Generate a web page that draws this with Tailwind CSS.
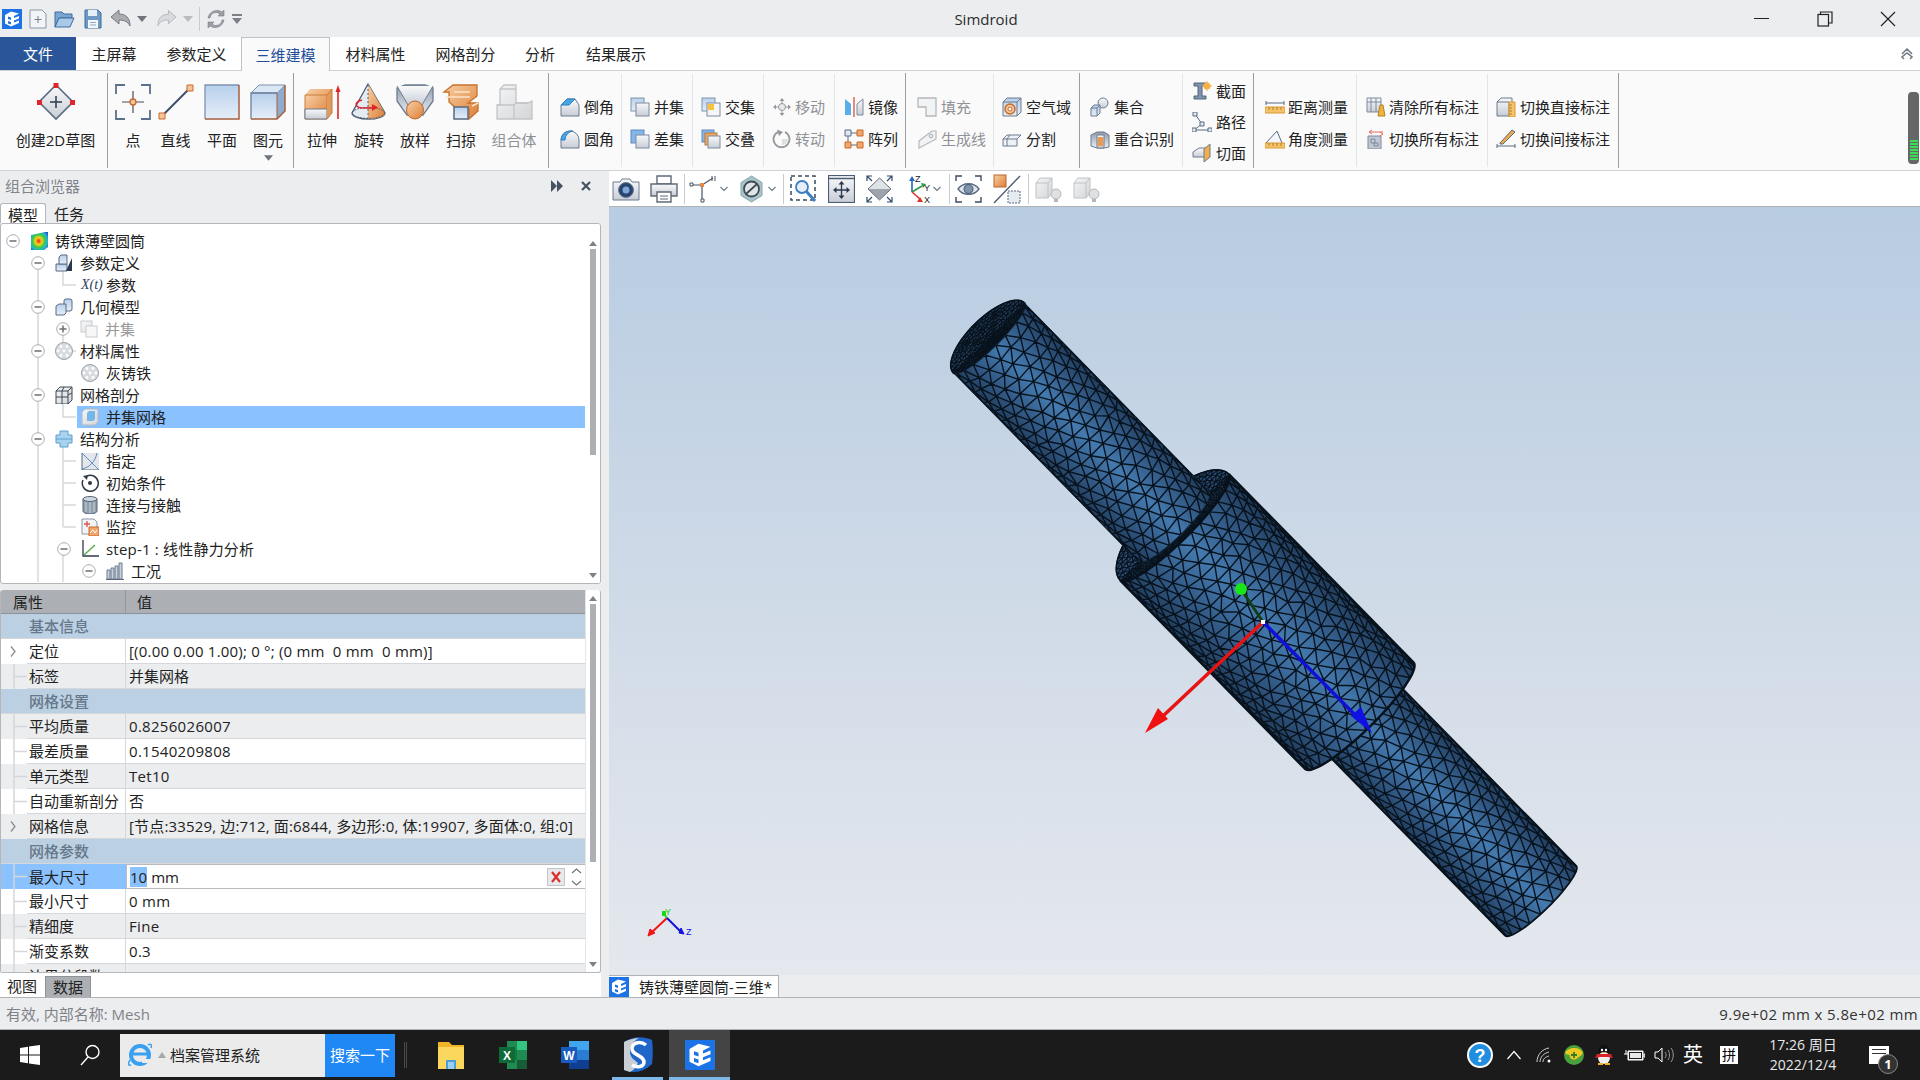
<!doctype html>
<html lang="zh-CN">
<head>
<meta charset="utf-8">
<title>Simdroid</title>
<script src="https://cdn.jsdelivr.net/npm/@tailwindcss/browser@4"></script>
</head>
<body class="flex h-[1080px] w-[1920px] flex-col overflow-hidden bg-[#ecedef] font-['Open_Sans','Noto_Sans_CJK_SC',sans-serif] text-[15px] leading-5 text-[#222]">

<!-- shared gradients and symbols -->
<svg width="0" height="0" class="absolute" aria-hidden="true">
  <defs>
    <linearGradient id="gb" x1="0" y1="0" x2="0" y2="1"><stop offset="0" stop-color="#b7d0ec"/><stop offset="1" stop-color="#e6eef8"/></linearGradient>
    <linearGradient id="gw" x1="0" y1="0" x2="0" y2="1"><stop offset="0" stop-color="#f8f9fb"/><stop offset="1" stop-color="#c8cdd6"/></linearGradient>
    <linearGradient id="go" x1="0" y1="0" x2="1" y2="1"><stop offset="0" stop-color="#f8cfa6"/><stop offset="1" stop-color="#dd7f35"/></linearGradient>
    <linearGradient id="gk" x1="0" y1="0" x2="0" y2="1"><stop offset="0" stop-color="#8e9aaa"/><stop offset="1" stop-color="#eceef2"/></linearGradient>
    <linearGradient id="gy" x1="0" y1="0" x2="1" y2="1"><stop offset="0" stop-color="#f4f5f6"/><stop offset="1" stop-color="#d3d5d8"/></linearGradient>
    <radialGradient id="gr" cx=".45" cy=".5" r=".65"><stop offset="0" stop-color="#ee1c1c"/><stop offset=".3" stop-color="#f6d21c"/><stop offset=".55" stop-color="#3cc84a"/><stop offset=".8" stop-color="#1db7d0"/><stop offset="1" stop-color="#2a58c8"/></radialGradient>
    <symbol id="logo" viewBox="0 0 20 20"><rect width="20" height="20" fill="#1b73e6"/><path d="M3 6l6-3.500 8 2-5 2.500v2l5-2v2.500l-5 2v2l5-2v2.500l-8 3.500-6-3zM6 7.500v2.500l3 1V8.500zM6 12v2.500l3 1V13z" fill="#fff"/></symbol>
    <symbol id="minus" viewBox="0 0 14 14"><circle cx="7" cy="7" r="6.300" fill="#fff" stroke="#a9acb0"/><path d="M3.500 7h7" stroke="#6b6e72" stroke-width="1.500"/></symbol>
    <symbol id="plus" viewBox="0 0 14 14"><circle cx="7" cy="7" r="6.300" fill="#fff" stroke="#a9acb0"/><path d="M3.500 7h7M7 3.500v7" stroke="#6b6e72" stroke-width="1.500"/></symbol>
    <symbol id="gut" viewBox="0 0 26 25"><path d="M13 0v25M13 12.500h13" stroke="#d4d6d9" stroke-width="1.500" fill="none"/></symbol>
    <symbol id="expand" viewBox="0 0 26 25"><path d="M10 7.500l4 5-4 5" stroke="#8a8d91" stroke-width="1.300" fill="none"/></symbol>
    <symbol id="chev" viewBox="0 0 8 6"><path d="M.5 1l3.500 3.500L7.500 1" stroke="#6b7785" stroke-width="1.100" fill="none"/></symbol>
    <symbol id="tri" viewBox="0 0 10 6"><path d="M0 0h10L5 6z" fill="#70757c"/></symbol>
    <symbol id="bulb" viewBox="0 0 28 28"><path d="M2 8l4-5h12v15l-4 5H2z" fill="url(#gy)" stroke="#c0c2c5"/><path d="M2 8h12v15M14 8l4-5" stroke="#c0c2c5" fill="none"/><circle cx="22" cy="19" r="5" fill="#dfe0e2" stroke="#b5b7ba"/><path d="M20 24h4v3h-4z" fill="#b5b7ba"/></symbol>
    <symbol id="chk" viewBox="0 0 18 18"><circle cx="9" cy="9" r="8.500" fill="#d8dbdf" stroke="#9aa0a8"/><circle cx="6" cy="4.500" r="1.400" fill="#fff"/><circle cx="12" cy="4.500" r="1.400" fill="#fff"/><circle cx="3" cy="9" r="1.400" fill="#fff"/><circle cx="9" cy="9" r="1.400" fill="#fff"/><circle cx="15" cy="9" r="1.400" fill="#fff"/><circle cx="6" cy="13.500" r="1.400" fill="#fff"/><circle cx="12" cy="13.500" r="1.400" fill="#fff"/></symbol>
  </defs>
</svg>

<!-- title bar -->
<header class="flex h-[37px] shrink-0 items-center">
  <div class="flex w-[300px] items-center pl-[2px]">
    <svg class="h-[20px] w-[20px]"><use href="#logo"/></svg>
    <svg class="ml-[7px] h-[20px] w-[18px]" viewBox="0 0 18 20"><path d="M1 1h12l4 4v14H1z" fill="#f2f4f7" stroke="#8c97a6"/><path d="M9 7v7M5.500 10.500h7" stroke="#77818e"/></svg>
    <svg class="ml-[7px] h-[20px] w-[21px]" viewBox="0 0 21 20"><path d="M1 3h7l2 2h8v4H5l-4 9z" fill="#7aa6d2" stroke="#3f6c9c"/><path d="M1 18l4-9h15l-4 9z" fill="#a9c9e8" stroke="#3f6c9c"/></svg>
    <svg class="ml-[9px] h-[20px] w-[18px]" viewBox="0 0 18 20"><path d="M1 1h13l3 3v15H1z" fill="#6c99c6" stroke="#3f6c9c"/><path d="M4 1h9v6H4z" fill="#e8eef5"/><path d="M4 11h10v8H4z" fill="#f4f6f9"/><path d="M6 13.500h6M6 16h6" stroke="#8ba8c6"/></svg>
    <svg class="ml-[8px] h-[20px] w-[21px]" viewBox="0 0 21 20"><path d="M1 8l8-7v4c7 0 11 4 11 12-2-4-5-6-11-6v4z" fill="#a9acb1" stroke="#74787e"/></svg>
    <svg class="ml-[6px] h-[6px] w-[10px]"><use href="#tri"/></svg>
    <svg class="ml-[10px] h-[20px] w-[20px]" viewBox="0 0 21 20"><path d="M20 8l-8-7v4C5 5 1 9 1 17c2-4 5-6 11-6v4z" fill="#d8dade" stroke="#b4b7bc"/></svg>
    <svg class="ml-[6px] h-[6px] w-[10px] opacity-40"><use href="#tri"/></svg>
    <div class="ml-[6px] h-[24px] w-px bg-[#c9cbce]"></div>
    <svg class="ml-[7px] h-[20px] w-[18px]" viewBox="0 0 18 20"><path d="M3 9a6 6 0 0 1 10-4l-2 2h6V1l-2 2A9 9 0 0 0 1 9zM15 11a6 6 0 0 1-10 4l2-2H1v6l2-2a9 9 0 0 0 14-6z" fill="#9a9ea4" stroke="#7c8086" stroke-width=".6"/></svg>
    <svg class="ml-[7px] h-[10px] w-[10px]" viewBox="0 0 10 10"><path d="M0 0h10v2H0zM0 4h10L5 10z" fill="#7c8086"/></svg>
  </div>
  <div class="flex-1 text-center text-[#2c2c2c]">Simdroid</div>
  <div class="flex w-[248px] items-center justify-end pr-[1px]">
    <div class="flex h-[37px] w-[63px] items-center justify-center"><div class="h-px w-[15px] bg-[#222]"></div></div>
    <div class="flex h-[37px] w-[63px] items-center justify-center">
      <svg class="h-[16px] w-[16px]" viewBox="0 0 16 16"><path d="M3.500 3.500V1h11.500v11h-3" fill="none" stroke="#222" stroke-width="1.200"/><rect x="1" y="3.500" width="10.500" height="11.500" fill="none" stroke="#222" stroke-width="1.200"/></svg>
    </div>
    <div class="flex h-[37px] w-[63px] items-center justify-center">
      <svg class="h-[16px] w-[16px]" viewBox="0 0 16 16"><path d="M1 1l14 14M15 1L1 15" stroke="#222" stroke-width="1.200"/></svg>
    </div>
  </div>
</header>

<!-- ribbon tabs -->
<nav class="relative flex h-[33px] shrink-0 items-center bg-white text-center">
  <div class="flex h-full w-[76px] items-center justify-center bg-[#2a5699] text-white">文件</div>
  <div class="w-[76px]">主屏幕</div>
  <div class="w-[89px]">参数定义</div>
  <div class="z-10 flex h-[34px] w-[89px] items-center justify-center self-start border border-b-0 border-[#bfc2c5] bg-[#fafafa] text-[#1f4e9c]">三维建模</div>
  <div class="w-[91px]">材料属性</div>
  <div class="w-[89px]">网格剖分</div>
  <div class="w-[60px]">分析</div>
  <div class="w-[92px]">结果展示</div>
  <svg class="ml-auto mr-[7px] h-[12px] w-[12px]" viewBox="0 0 12 12"><path d="M1 6l5-5 5 5M3 11l-2-2 5-4 5 4-2 2" fill="none" stroke="#6f7a86" stroke-width="1.500"/></svg>
</nav>

<!-- ribbon -->
<section class="flex h-[101px] shrink-0 border-y border-[#d0d1d3] bg-[#fafafa]">
  <div class="my-[2px] flex w-[108px] flex-col items-center border-r border-[#9a9da1] pl-[4px] pt-[10px]">
    <svg class="h-[38px] w-[38px]" viewBox="0 0 38 38"><path d="M19 2l17 17-17 17L2 19z" fill="url(#gw)" stroke="#5a6a80" stroke-width="1.600"/><path d="M19 13v12M13 19h12" stroke="#2d3a4c" stroke-width="1.500"/><path d="M16.500 0h5v5h-5zM0 17h5v5H0zM33 17h5v5h-5z" fill="#e0262c"/></svg>
    <span class="mt-[9px] whitespace-nowrap">创建2D草图</span>
  </div>

  <div class="my-[2px] flex w-[186px] border-r border-[#9a9da1] pl-[4px] pt-[10px] text-center">
    <div class="flex w-[42px] flex-col items-center">
      <svg class="h-[38px] w-[38px]" viewBox="0 0 38 38"><path d="M2 11V2h9M27 2h9v9M36 27v9h-9M11 36H2v-9" fill="none" stroke="#5b708e" stroke-width="1.800"/><path d="M8 19h22M19 8v22" stroke="#4a4f58" stroke-width="1.200"/><circle cx="19" cy="19" r="3" fill="#f3c69a" stroke="#c9682a" stroke-width="1.300"/></svg>
      <span class="mt-[9px]">点</span>
    </div>
    <div class="ml-[0.5px] flex w-[42px] flex-col items-center">
      <svg class="h-[38px] w-[38px]" viewBox="0 0 38 38"><path d="M5 33L33 5" stroke="#3d4f70" stroke-width="2"/><path d="M2 30h6v6H2zM30 2h6v6h-6z" fill="#f3c69a" stroke="#c9682a"/></svg>
      <span class="mt-[9px]">直线</span>
    </div>
    <div class="ml-[4.5px] flex w-[42px] flex-col items-center">
      <svg class="h-[38px] w-[38px]" viewBox="0 0 38 38"><rect x="2" y="2" width="34" height="34" fill="url(#gb)"/><path d="M2 36V2h34" fill="none" stroke="#7f93ad" stroke-width="1.300"/><path d="M2 36h34V2" fill="none" stroke="#a55f3e" stroke-width="1.500"/></svg>
      <span class="mt-[9px]">平面</span>
    </div>
    <div class="ml-[4px] flex w-[42px] flex-col items-center">
      <svg class="h-[38px] w-[38px]" viewBox="0 0 38 38"><path d="M2 10h26v26H2z" fill="url(#gb)"/><path d="M2 10l8-8h26l-8 8z" fill="#dbe7f4" stroke="#7f93ad"/><path d="M28 10l8-8v26l-8 8z" fill="#8faccc"/><path d="M2 36V10h26" fill="none" stroke="#6d819c" stroke-width="1.300"/><path d="M2 36h26l8-8V2" fill="none" stroke="#a55f3e" stroke-width="1.500"/><path d="M28 10v26" stroke="#a55f3e"/></svg>
      <span class="mt-[9px]">图元</span>
      <svg class="mt-[5px] h-[6px] w-[9px]"><use href="#tri"/></svg>
    </div>
  </div>

  <div class="my-[2px] flex w-[255px] border-r border-[#9a9da1] pl-[5px] pt-[10px] text-center">
    <div class="flex w-[46px] flex-col items-center">
      <svg class="h-[38px] w-[38px]" viewBox="0 0 38 38"><path d="M2 12l5-6h22v24l-5 6H2z" fill="url(#go)"/><path d="M2 12h22v24H2z" fill="url(#go)" stroke="#c97a3a"/><path d="M2 26h22v10H2z" fill="url(#gw)" stroke="#6e7a8a"/><path d="M24 36l5-6V6l-5 6" fill="#e09a5c" stroke="#c97a3a"/><path d="M35 36V6" stroke="#e0262c" stroke-width="1.600"/><path d="M32.500 9L35 2l2.500 7z" fill="#e0262c"/></svg>
      <span class="mt-[9px]">拉伸</span>
    </div>
    <div class="ml-px flex w-[46px] flex-col items-center">
      <svg class="h-[38px] w-[38px]" viewBox="0 0 38 38"><path d="M18 1L2 30a16 6 0 0 0 33 0z" fill="#e6ebf2" stroke="#4f5f76" stroke-width="1.300"/><path d="M18 1l17 29a16 6 0 0 1-17 6z" fill="url(#go)"/><ellipse cx="18.500" cy="30" rx="16" ry="5.500" fill="none" stroke="#4f5f76" stroke-dasharray="2 1"/><path d="M18 2v33" stroke="#4f5f76" stroke-dasharray="2 2"/><path d="M12 17c-8 2-8 8 2 8h9" fill="none" stroke="#e0262c" stroke-width="1.600"/><path d="M22 21l6 3.500-6 3.500z" fill="#e0262c"/></svg>
      <span class="mt-[9px]">旋转</span>
    </div>
    <div class="flex w-[46px] flex-col items-center">
      <svg class="h-[38px] w-[38px]" viewBox="0 0 38 38"><path d="M1 5l8-3h20l8 3v13l-10 14H11L1 18z" fill="url(#gk)" stroke="#6d7d92" stroke-width="1.300"/><path d="M1 3h36L26 22H12z" fill="url(#gw)"/><path d="M1 3l11 19M37 3L26 22" stroke="#6d7d92"/><ellipse cx="19" cy="27" rx="8.500" ry="9" fill="url(#go)" stroke="#b8672d"/></svg>
      <span class="mt-[9px]">放样</span>
    </div>
    <div class="flex w-[46px] flex-col items-center">
      <svg class="h-[38px] w-[38px]" viewBox="0 0 38 38"><path d="M2 9l9-7h24v11l-9 7h10v8l-9 8V26H15l-8-7V9z" fill="url(#go)" stroke="#c8712c" stroke-width="1.300"/><path d="M4 14h24M12 9l16 0M30 23l6-3" stroke="#fbe3c9" stroke-width="1.600"/><path d="M12 24h14v12H12z" fill="url(#gb)" stroke="#5a6a80" stroke-width="1.500"/></svg>
      <span class="mt-[9px]">扫掠</span>
    </div>
    <div class="ml-[7px] flex w-[46px] flex-col items-center text-[#8f9296]">
      <svg class="h-[38px] w-[38px]" viewBox="0 0 38 38"><path d="M5 22V6l4-4h12v18h12l4-2v18H2V22z" fill="url(#gy)" stroke="#c3c5c8" stroke-width="1.300"/><path d="M2 22h17v14M19 22l2-2M5 6h16M21 20H33" stroke="#c3c5c8" fill="none" stroke-width="1.300"/></svg>
      <span class="mt-[9px] whitespace-nowrap">组合体</span>
    </div>
  </div>

  <div class="my-[3px] flex w-[73px] flex-col border-r border-[#e4e5e6] pl-[11px] pt-[17px]">
    <div class="flex h-[32px] items-center gap-[4px]"><svg class="h-[20px] w-[20px]" viewBox="0 0 20 20"><path d="M1 8l6-6h8l4 6v11H1z" fill="url(#gw)" stroke="#6d7b8e"/><path d="M1 8l6-6h8l-6 6z" fill="#49a4e6" stroke="#2f80bf"/></svg>倒角</div>
    <div class="flex h-[32px] items-center gap-[4px]"><svg class="h-[20px] w-[20px]" viewBox="0 0 20 20"><path d="M1 19V11a9 9 0 0 1 18 0v8z" fill="url(#gw)" stroke="#6d7b8e"/><path d="M1 11a9 9 0 0 1 9-9h3A9 9 0 0 0 5 11z" fill="#49a4e6" stroke="#2f80bf"/></svg>圆角</div>
  </div>
  <div class="my-[3px] flex w-[71px] flex-col border-r border-[#e4e5e6] pl-[8px] pt-[17px]">
    <div class="flex h-[32px] items-center gap-[4px]"><svg class="h-[20px] w-[20px]" viewBox="0 0 20 20"><rect x="1" y="1" width="13" height="13" fill="url(#gb)" stroke="#7f93ad"/><rect x="6" y="6" width="13" height="13" fill="url(#gw)" stroke="#7f8a9c"/></svg>并集</div>
    <div class="flex h-[32px] items-center gap-[4px]"><svg class="h-[20px] w-[20px]" viewBox="0 0 20 20"><rect x="1" y="1" width="13" height="13" fill="#84b7e8" stroke="#5f8cbc"/><rect x="6" y="6" width="13" height="13" fill="url(#gw)" stroke="#7f8a9c"/></svg>差集</div>
  </div>
  <div class="my-[3px] flex w-[71px] flex-col border-r border-[#e4e5e6] pl-[8px] pt-[17px]">
    <div class="flex h-[32px] items-center gap-[4px]"><svg class="h-[20px] w-[20px]" viewBox="0 0 20 20"><rect x="1" y="1" width="13" height="13" fill="url(#gb)" stroke="#7f93ad"/><rect x="6" y="6" width="13" height="13" fill="#f4f6f9" stroke="#7f8a9c"/><rect x="7" y="7" width="6" height="6" fill="#f6c33a"/></svg>交集</div>
    <div class="flex h-[32px] items-center gap-[4px]"><svg class="h-[20px] w-[20px]" viewBox="0 0 20 20"><rect x="1" y="1" width="12" height="12" fill="#84b7e8" stroke="#5f8cbc"/><rect x="4" y="4" width="12" height="12" fill="#efa865" stroke="#b57a42"/><rect x="7" y="7" width="12" height="12" fill="url(#gw)" stroke="#7f8a9c"/></svg>交叠</div>
  </div>
  <div class="my-[3px] flex w-[71px] flex-col border-r border-[#e4e5e6] pl-[8px] pt-[17px] text-[#8f9296]">
    <div class="flex h-[32px] items-center gap-[3px]"><svg class="h-[20px] w-[20px]" viewBox="0 0 20 20"><path d="M10 1l2.500 3h-5zM10 19l2.500-3h-5zM1 10l3-2.500v5zM19 10l-3-2.500v5z" fill="#94989e"/><circle cx="10" cy="10" r="3.500" fill="#e8e9eb" stroke="#94989e"/><path d="M10 4v2.500M10 13.500V16M4 10h2.500M13.500 10H16" stroke="#94989e"/></svg>移动</div>
    <div class="flex h-[32px] items-center gap-[3px]"><svg class="h-[20px] w-[20px]" viewBox="0 0 20 20"><path d="M13 3a8 8 0 1 1-7 0" fill="none" stroke="#94989e" stroke-width="1.800"/><path d="M5 .5L11 3 7 7z" fill="#94989e"/><path d="M10 10h6a6 6 0 0 1-6 6z" fill="#dfe0e2"/></svg>转动</div>
  </div>
  <div class="my-[2px] flex w-[71px] flex-col border-r border-[#9a9da1] pl-[9px] pt-[18px]">
    <div class="flex h-[32px] items-center gap-[4px]"><svg class="h-[20px] w-[20px]" viewBox="0 0 20 20"><path d="M1 2l6 5v11H1z" fill="#59aee8"/><path d="M19 2l-6 5v11h6z" fill="url(#gw)" stroke="#7f8a9c"/><path d="M10 0v20" stroke="#e48a7e" stroke-width="2"/></svg>镜像</div>
    <div class="flex h-[32px] items-center gap-[4px]"><svg class="h-[20px] w-[20px]" viewBox="0 0 20 20"><path d="M4 4h12M4 4v12M4 16h12" stroke="#5a6a80"/><path d="M1 1h6v6H1z" fill="#dfe9f5" stroke="#5a6a80"/><path d="M13 1h6v6h-6zM1 13h6v6H1zM13 13h6v6h-6z" fill="#f1a66b" stroke="#c9682a"/></svg>阵列</div>
  </div>
  <div class="my-[3px] flex w-[88px] flex-col border-r border-[#e4e5e6] pl-[11px] pt-[17px] text-[#8f9296]">
    <div class="flex h-[32px] items-center gap-[4px]"><svg class="h-[20px] w-[20px]" viewBox="0 0 20 20"><path d="M1 1h18v18H9v-9H1z" fill="#f2f3f4" stroke="#b5b7ba" stroke-width="1.300"/></svg>填充</div>
    <div class="flex h-[32px] items-center gap-[4px]"><svg class="h-[20px] w-[20px]" viewBox="0 0 20 20"><path d="M2 12L15 2h4v8L2 19z" fill="#f2f3f4" stroke="#b5b7ba" stroke-width="1.200"/><circle cx="14" cy="7" r="1.800" fill="none" stroke="#a5a7aa"/></svg>生成线</div>
  </div>
  <div class="my-[2px] flex w-[86px] flex-col border-r border-[#9a9da1] pl-[8px] pt-[18px]">
    <div class="flex h-[32px] items-center gap-[4px] whitespace-nowrap"><svg class="h-[20px] w-[20px]" viewBox="0 0 20 20"><path d="M1 5l4-4h14v14l-4 4H1z" fill="url(#gb)" stroke="#6d7b8e"/><path d="M1 5h14v14M15 5l4-4" fill="none" stroke="#6d7b8e"/><circle cx="8" cy="12" r="5" fill="#f3c69a" stroke="#c9682a" stroke-width="1.400"/><circle cx="8" cy="12" r="2" fill="#fff" stroke="#c9682a"/></svg>空气域</div>
    <div class="flex h-[32px] items-center gap-[4px]"><svg class="h-[20px] w-[20px]" viewBox="0 0 20 20"><path d="M1 10l4-4h14l-4 4v7H1z" fill="#eef2f7" stroke="#6d7b8e"/><path d="M1 10h14M8 6l-3 4v7" fill="none" stroke="#6d7b8e"/></svg>分割</div>
  </div>
  <div class="my-[3px] flex w-[103px] flex-col border-r border-[#e4e5e6] pl-[10px] pt-[17px]">
    <div class="flex h-[32px] items-center gap-[4px]"><svg class="h-[20px] w-[20px]" viewBox="0 0 20 20"><circle cx="13" cy="6" r="5" fill="url(#gw)" stroke="#6d7b8e"/><path d="M1 11l3-3h6v8l-3 3H1z" fill="url(#gb)" stroke="#6d7b8e"/><path d="M1 11h6v8M7 11l3-3" fill="none" stroke="#6d7b8e"/></svg>集合</div>
    <div class="flex h-[32px] items-center gap-[4px] whitespace-nowrap"><svg class="h-[20px] w-[20px]" viewBox="0 0 20 20"><path d="M1 6l6-3h7l5 3v12l-5 1H7l-6-2z" fill="url(#gk)" stroke="#6d7b8e"/><path d="M7 6h7v13H7z" fill="url(#gw)" stroke="#6d7b8e"/><path d="M8 8h5v9H8z" fill="#ee9a4e"/></svg>重合识别</div>
  </div>
  <div class="my-[2px] flex w-[71px] flex-col border-r border-[#9a9da1] pl-[9px] pt-[3px]">
    <div class="flex h-[32px] items-center gap-[4px]"><svg class="h-[20px] w-[20px]" viewBox="0 0 20 20"><path d="M2 2h12v3H10v10h4v3H2v-3h4V5H2z" fill="#7f93ad" stroke="#55657c"/><circle cx="15" cy="5" r="3.500" fill="#f6b044"/><path d="M15 0v10M10 5h10" stroke="#f6b044"/></svg>截面</div>
    <div class="flex h-[32px] items-center gap-[4px]"><svg class="h-[20px] w-[20px]" viewBox="0 0 20 20"><path d="M3 2l7 10-8 6h16" fill="none" stroke="#5a6a80"/><path d="M1 0h4v4H1zM8 10h4v4H8zM0 16h4v4H0zM16 16h4v4h-4z" fill="#dfe9f5" stroke="#5a6a80"/></svg>路径</div>
    <div class="flex h-[32px] items-center gap-[4px]"><svg class="h-[20px] w-[20px]" viewBox="0 0 20 20"><path d="M1 9l6-4h9v9H1z" fill="url(#gw)" stroke="#6d7b8e"/><path d="M12 6l6-5v13l-6 5z" fill="#f2b04c" stroke="#6d7b8e"/></svg>切面</div>
  </div>
  <div class="my-[3px] flex w-[103px] flex-col border-r border-[#e4e5e6] pl-[11px] pt-[17px]">
    <div class="flex h-[32px] items-center gap-[3px] whitespace-nowrap"><svg class="h-[20px] w-[20px]" viewBox="0 0 20 20"><path d="M1 6h18" stroke="#5a6a80"/><path d="M1 4v4M19 4v4" stroke="#5a6a80"/><path d="M0 10h20v6H0z" fill="#f5c36a" stroke="#d99a35"/><path d="M4 10v3M8 10v3M12 10v3M16 10v3" stroke="#b97f25"/></svg>距离测量</div>
    <div class="flex h-[32px] items-center gap-[3px] whitespace-nowrap"><svg class="h-[20px] w-[20px]" viewBox="0 0 20 20"><path d="M1 14L12 2l5 12" fill="#f4f6f9" stroke="#5a6a80"/><path d="M0 14h20v5H0z" fill="#f5c36a" stroke="#d99a35"/><path d="M4 14v3M8 14v3M12 14v3M16 14v3" stroke="#b97f25"/></svg>角度测量</div>
  </div>
  <div class="my-[3px] flex w-[131px] flex-col border-r border-[#e4e5e6] pl-[9px] pt-[17px]">
    <div class="flex h-[32px] items-center gap-[3px] whitespace-nowrap"><svg class="h-[20px] w-[20px]" viewBox="0 0 20 20"><path d="M1 1h14v14H1z" fill="url(#gw)" stroke="#7f8a9c"/><path d="M1 5h14M5 1v14M10 1v14" stroke="#7f8a9c"/><path d="M14 8h3l2 11h-7z" fill="#efb33f" stroke="#b3841f"/></svg>清除所有标注</div>
    <div class="flex h-[32px] items-center gap-[3px] whitespace-nowrap"><svg class="h-[20px] w-[20px]" viewBox="0 0 20 20"><path d="M2 7h13v13H2z" fill="#c0c8d4" stroke="#7f8a9c"/><path d="M5 10h4v4H5zM8 14h4v3H8z" fill="none" stroke="#7f8a9c"/><path d="M6 1l-3 2 3 2M3 3h14" stroke="#ea6b5e" fill="none"/><path d="M14 3l3 2-3 2" stroke="#ea6b5e" fill="none"/></svg>切换所有标注</div>
  </div>
  <div class="my-[2px] flex w-[131px] flex-col border-r border-[#9a9da1] pl-[8px] pt-[18px]">
    <div class="flex h-[32px] items-center gap-[4px] whitespace-nowrap"><svg class="h-[20px] w-[20px]" viewBox="0 0 20 20"><path d="M1 5l4-4h11v15l-3 3H1z" fill="url(#gw)" stroke="#6d7b8e"/><path d="M1 5h12v14" fill="none" stroke="#6d7b8e"/><path d="M13 5h6v15h-6z" fill="#f5c36a" stroke="#d99a35"/><path d="M13 8h3M13 11h3M13 14h3M13 17h3" stroke="#b97f25"/></svg>切换直接标注</div>
    <div class="flex h-[32px] items-center gap-[4px] whitespace-nowrap"><svg class="h-[20px] w-[20px]" viewBox="0 0 20 20"><path d="M1 17h18M1 15v4M19 15v4" stroke="#5a6a80"/><path d="M4 14L16 1l3 2L7 15H4z" fill="#f0a94a" stroke="#5a6a80"/></svg>切换间接标注</div>
  </div>
  <div class="relative flex-1">
    <div class="absolute right-[1px] top-[21px] flex h-[72px] w-[11px] flex-col justify-end gap-px rounded-[4px] bg-[#666] px-[1.5px] pb-[4px]">
      <div class="h-[2px] bg-[#3ddc5a]"></div><div class="h-[2px] bg-[#3ddc5a]"></div><div class="h-[2px] bg-[#3ddc5a]"></div><div class="h-[2px] bg-[#3ddc5a]"></div><div class="h-[2px] bg-[#3ddc5a]"></div><div class="h-[2px] bg-[#3ddc5a]"></div><div class="h-[2px] bg-[#3ddc5a]"></div>
    </div>
  </div>
</section>

<!-- workspace -->
<main class="flex h-[826px] shrink-0">
  <!-- left dock -->
  <aside class="flex w-[609px] shrink-0 flex-col pr-[8px]">
    <div class="flex h-[32px] shrink-0 items-center pb-[3px] pl-[5px] text-[#80848a]">
      组合浏览器
      <svg class="ml-[471px] h-[12px] w-[12px]" viewBox="0 0 12 12"><path d="M0 0l6 6-6 6zM6 0l6 6-6 6z" fill="#46525f"/></svg>
      <svg class="ml-[18px] h-[10px] w-[10px]" viewBox="0 0 10 10"><path d="M1 1l8 8M9 1L1 9" stroke="#46525f" stroke-width="2.200"/></svg>
    </div>
    <div class="relative z-10 flex h-[20px] shrink-0">
      <div class="w-[46px] rounded-t-[3px] border border-b-0 border-[#b4b6b9] bg-white pt-px text-center">模型</div>
      <div class="ml-[8px] pt-px">任务</div>
    </div>
    <!-- tree -->
    <div class="relative h-[361px] shrink-0 overflow-hidden rounded-[3px] border border-[#b4b6b9] bg-white pt-[6px]">
      <svg class="absolute left-0 top-[6px] h-[352px] w-[200px]" viewBox="0 0 200 352" aria-hidden="true">
        <path d="M37 33v320M62 33v22h13M62 99v22h13M62 165v22h13M62 209v88M62 231h13M62 253h13M62 275h13M62 297h13M62 319v34" stroke="#d6d8db" stroke-width="1.500" fill="none"/>
      </svg>
      <div class="relative">
        <div class="flex h-[22px] items-center pl-[5px]"><svg class="h-[14px] w-[14px]"><use href="#minus"/></svg>
          <svg class="ml-[10px] h-[18px] w-[18px]" viewBox="0 0 18 18"><path d="M1 3l14-3h3v15l-4 3H1z" fill="url(#gr)"/></svg><span class="ml-[7px]">铸铁薄壁圆筒</span></div>
        <div class="flex h-[22px] items-center pl-[30px]"><svg class="h-[14px] w-[14px]"><use href="#minus"/></svg>
          <svg class="ml-[10px] h-[18px] w-[18px]" viewBox="0 0 18 18"><path d="M1 10h11v7H1z" fill="url(#gb)" stroke="#5a6a80"/><path d="M4 3l2-2h6v9H4z" fill="url(#gb)" stroke="#5a6a80"/><path d="M17 4v13h-6z" fill="#27384f"/></svg><span class="ml-[7px]">参数定义</span></div>
        <div class="flex h-[22px] items-center pl-[80px]"><span class="w-[18px] whitespace-nowrap font-['Liberation_Serif',serif] text-[14px] italic text-[#2d3f5c]">X(t)</span><span class="ml-[7px]">参数</span></div>
        <div class="flex h-[22px] items-center pl-[30px]"><svg class="h-[14px] w-[14px]"><use href="#minus"/></svg>
          <svg class="ml-[10px] h-[18px] w-[18px]" viewBox="0 0 18 18"><rect x="9" y="1" width="8" height="12" rx="2" fill="url(#gb)" stroke="#5a6a80"/><path d="M1 8l3-2h7v9l-2 2H1z" fill="url(#gb)" stroke="#5a6a80"/></svg><span class="ml-[7px]">几何模型</span></div>
        <div class="flex h-[22px] items-center pl-[55px] text-[#999]"><svg class="h-[14px] w-[14px]"><use href="#plus"/></svg>
          <svg class="ml-[10px] h-[18px] w-[18px] opacity-70" viewBox="0 0 18 18"><rect x="1" y="1" width="11" height="11" fill="url(#gy)" stroke="#b5b7ba"/><rect x="6" y="6" width="11" height="11" fill="#f4f4f5" stroke="#b5b7ba"/></svg><span class="ml-[7px]">并集</span></div>
        <div class="flex h-[22px] items-center pl-[30px]"><svg class="h-[14px] w-[14px]"><use href="#minus"/></svg>
          <svg class="ml-[10px] h-[18px] w-[18px]"><use href="#chk"/></svg><span class="ml-[7px]">材料属性</span></div>
        <div class="flex h-[22px] items-center pl-[80px]"><svg class="h-[18px] w-[18px]"><use href="#chk"/></svg><span class="ml-[7px]">灰铸铁</span></div>
        <div class="flex h-[22px] items-center pl-[30px]"><svg class="h-[14px] w-[14px]"><use href="#minus"/></svg>
          <svg class="ml-[10px] h-[18px] w-[18px]" viewBox="0 0 18 18"><path d="M1 5l4-4h12v13l-4 4H1z" fill="url(#gy)" stroke="#3c4653"/><path d="M1 5h12v13M13 5l4-4M7 5v13M1 11h12M9 1L7 5M13 9l4-2" fill="none" stroke="#3c4653"/></svg><span class="ml-[7px]">网格剖分</span></div>
        <div class="flex h-[22px] items-center pl-[76px]"><div class="flex h-full w-[510px] items-center bg-[#8ac2ff] pl-[4px]"><svg class="h-[18px] w-[18px]" viewBox="0 0 18 18"><path d="M1 4l3-3h13v13l-3 3H1z" fill="url(#gy)" stroke="#b1b9c4"/><path d="M6 5l2-2h6v8l-2 2H6z" fill="#74b6e6"/></svg><span class="ml-[7px]">并集网格</span></div></div>
        <div class="flex h-[22px] items-center pl-[30px]"><svg class="h-[14px] w-[14px]"><use href="#minus"/></svg>
          <svg class="ml-[10px] h-[18px] w-[18px]" viewBox="0 0 18 18"><path d="M5 1h8v4h4v8h-4v4H5v-4H1V5h4z" fill="#a9d2ee" stroke="#5aa0d2"/><path d="M1 9h16" stroke="#5aa0d2"/></svg><span class="ml-[7px]">结构分析</span></div>
        <div class="flex h-[22px] items-center pl-[80px]"><svg class="h-[18px] w-[18px]" viewBox="0 0 18 18"><rect x="1" y="1" width="17" height="17" fill="#e3e6ea"/><path d="M1 1l17 17M16 1C14 10 9 15 1 17" stroke="#5e8cbb" fill="none"/><path d="M1 1v17h17" stroke="#5a6a80" fill="none"/></svg><span class="ml-[7px]">指定</span></div>
        <div class="flex h-[22px] items-center pl-[80px]"><svg class="h-[18px] w-[18px]" viewBox="0 0 18 18"><path d="M6 2a8 8 0 1 1-4 4" fill="none" stroke="#2f3a48" stroke-width="1.500"/><path d="M2 2l5-1-1 5z" fill="#2f3a48"/><circle cx="9" cy="9" r="2" fill="#2f3a48"/></svg><span class="ml-[7px]">初始条件</span></div>
        <div class="flex h-[22px] items-center pl-[80px]"><svg class="h-[18px] w-[18px]" viewBox="0 0 18 18"><path d="M2 3h14v12a7 3 0 0 1-14 0z" fill="#8fa0ad" stroke="#56677a"/><ellipse cx="9" cy="3" rx="7" ry="2.500" fill="#cfd6dc" stroke="#56677a"/><path d="M5 6v10M9 6v11M13 6v10" stroke="#c9d1d8"/></svg><span class="ml-[7px]">连接与接触</span></div>
        <div class="flex h-[22px] items-center pl-[80px]"><svg class="h-[18px] w-[18px]" viewBox="0 0 18 18"><path d="M1 1h12l3 3v6H9v6H1z" fill="#f2f4f7" stroke="#8c97a6"/><path d="M6 3v6M3 6h6" stroke="#d9534a" stroke-width="1.300"/><path d="M8 9h10v9H8z" fill="#f1a66b" stroke="#c9682a"/><path d="M9 15l3-3 2 3 2-3" stroke="#fff" fill="none"/></svg><span class="ml-[7px]">监控</span></div>
        <div class="flex h-[22px] items-center pl-[56px]"><svg class="h-[14px] w-[14px]"><use href="#minus"/></svg>
          <svg class="ml-[10px] h-[18px] w-[18px]" viewBox="0 0 18 18"><path d="M2 0v16h16" stroke="#2f3a48" fill="none" stroke-width="1.300"/><path d="M3 15l11-10" stroke="#55a84a" stroke-width="1.300"/></svg><span class="ml-[7px] whitespace-nowrap tracking-[0.2px]">step-1 : 线性静力分析</span></div>
        <div class="flex h-[22px] items-center pl-[81px]"><svg class="h-[14px] w-[14px]"><use href="#minus"/></svg>
          <svg class="ml-[10px] h-[18px] w-[18px]" viewBox="0 0 18 18"><path d="M1 8h3v9H1zM5 6h3v11H5zM9 4h3v13H9zM13 1h3v16h-3z" fill="#c9d2dc" stroke="#6a7a8e"/><path d="M0 17.500h18" stroke="#5a6a80"/></svg><span class="ml-[7px]">工况</span></div>
      </div>
      <div class="absolute right-0 top-0 flex h-full w-[15px] flex-col items-center bg-white">
        <svg class="mt-[17px] h-[5px] w-[8px]" viewBox="0 0 8 5"><path d="M0 5l4-5 4 5z" fill="#7c8288"/></svg>
        <div class="mt-[3px] h-[206px] w-[6px] bg-[#acb0b4]"></div>
        <svg class="mb-[5px] mt-auto h-[5px] w-[8px]" viewBox="0 0 8 5"><path d="M0 0l4 5 4-5z" fill="#7c8288"/></svg>
      </div>
    </div>
    <!-- property table -->
    <div class="relative mt-[6px] h-[383px] shrink-0 overflow-hidden rounded-[3px] border border-t-0 border-[#b4b6b9] bg-white pr-[14px]">
      <div class="flex h-[24px] items-center border-b border-[#8e9296] bg-[#acb0b4]"><div class="flex h-full w-[125px] items-center border-r border-[#94989c] pl-[12px]">属性</div><div class="pl-[11px]">值</div></div>

      <div class="flex h-[25px] items-center border-b border-[#d5d7da] bg-[#bcd0e3] pl-[28px] font-medium text-[#66788a]">基本信息</div>

      <div class="flex h-[25px] bg-white"><svg class="h-[25px] w-[26px] shrink-0"><use href="#expand"/></svg><div class="flex flex-1 items-center border-b border-[#d5d7da]"><div class="flex h-full w-[99px] items-center border-r border-[#d5d7da] pl-[2px]">定位</div><div class="whitespace-pre pl-[3px] tracking-[0.2px]">[(0.00 0.00 1.00); 0 °; (0 mm  0 mm  0 mm)]</div></div></div>
      <div class="flex h-[25px] bg-[#ecedef]"><svg class="h-[25px] w-[26px] shrink-0"><use href="#gut"/></svg><div class="flex flex-1 items-center border-b border-[#d5d7da]"><div class="flex h-full w-[99px] items-center border-r border-[#d5d7da] pl-[2px]">标签</div><div class="pl-[3px]">并集网格</div></div></div>

      <div class="flex h-[25px] items-center border-b border-[#d5d7da] bg-[#bcd0e3] pl-[28px] font-medium text-[#66788a]">网格设置</div>

      <div class="flex h-[25px] bg-[#ecedef]"><svg class="h-[25px] w-[26px] shrink-0"><use href="#gut"/></svg><div class="flex flex-1 items-center border-b border-[#d5d7da]"><div class="flex h-full w-[99px] items-center border-r border-[#d5d7da] pl-[2px]">平均质量</div><div class="pl-[3px] tracking-[0.3px]">0.8256026007</div></div></div>
      <div class="flex h-[25px] bg-white"><svg class="h-[25px] w-[26px] shrink-0"><use href="#gut"/></svg><div class="flex flex-1 items-center border-b border-[#d5d7da]"><div class="flex h-full w-[99px] items-center border-r border-[#d5d7da] pl-[2px]">最差质量</div><div class="pl-[3px] tracking-[0.3px]">0.1540209808</div></div></div>
      <div class="flex h-[25px] bg-[#ecedef]"><svg class="h-[25px] w-[26px] shrink-0"><use href="#gut"/></svg><div class="flex flex-1 items-center border-b border-[#d5d7da]"><div class="flex h-full w-[99px] items-center border-r border-[#d5d7da] pl-[2px]">单元类型</div><div class="pl-[3px] tracking-[0.3px]">Tet10</div></div></div>
      <div class="flex h-[25px] bg-white"><svg class="h-[25px] w-[26px] shrink-0"><use href="#gut"/></svg><div class="flex flex-1 items-center border-b border-[#d5d7da]"><div class="flex h-full w-[99px] items-center whitespace-nowrap border-r border-[#d5d7da] pl-[2px]">自动重新剖分</div><div class="pl-[3px]">否</div></div></div>
      <div class="flex h-[25px] bg-[#ecedef]"><svg class="h-[25px] w-[26px] shrink-0"><use href="#expand"/></svg><div class="flex flex-1 items-center border-b border-[#d5d7da]"><div class="flex h-full w-[99px] items-center border-r border-[#d5d7da] pl-[2px]">网格信息</div><div class="whitespace-nowrap pl-[3px] tracking-[0.16px]">[节点:33529, 边:712, 面:6844, 多边形:0, 体:19907, 多面体:0, 组:0]</div></div></div>

      <div class="flex h-[25px] items-center border-b border-[#d5d7da] bg-[#bcd0e3] pl-[28px] font-medium text-[#66788a]">网格参数</div>

      <div class="flex h-[25px] bg-white">
        <svg class="h-[25px] w-[26px] shrink-0 bg-[#8ac2ff]"><use href="#gut"/></svg>
        <div class="flex h-full w-[99px] items-center bg-[#8ac2ff] pl-[2px]">最大尺寸</div>
        <div class="flex flex-1 items-center border-y border-l border-[#b8babd] pl-[3px]">
          <span class="bg-[#8ac2ff]">10</span><span class="ml-[4px]">mm</span>
          <svg class="ml-auto h-[18px] w-[18px]" viewBox="0 0 18 18"><rect x=".5" y=".5" width="17" height="17" fill="#e7e9ec" stroke="#c2c5c9"/><path d="M5 4l8 10M13 4L5 14" stroke="#d9322c" stroke-width="2.200"/></svg>
          <svg class="ml-[6px] mr-[4px] h-[18px] w-[11px]" viewBox="0 0 11 18"><path d="M1 5l4.500-4L10 5M1 13l4.500 4 4.500-4" fill="none" stroke="#6f7478" stroke-width="1.200"/></svg>
        </div>
      </div>
      <div class="flex h-[25px] bg-white"><svg class="h-[25px] w-[26px] shrink-0"><use href="#gut"/></svg><div class="flex flex-1 items-center border-b border-[#d5d7da]"><div class="flex h-full w-[99px] items-center border-r border-[#d5d7da] pl-[2px]">最小尺寸</div><div class="pl-[3px] tracking-[0.3px]">0 mm</div></div></div>
      <div class="flex h-[25px] bg-[#ecedef]"><svg class="h-[25px] w-[26px] shrink-0"><use href="#gut"/></svg><div class="flex flex-1 items-center border-b border-[#d5d7da]"><div class="flex h-full w-[99px] items-center border-r border-[#d5d7da] pl-[2px]">精细度</div><div class="pl-[3px] tracking-[0.3px]">Fine</div></div></div>
      <div class="flex h-[25px] bg-white"><svg class="h-[25px] w-[26px] shrink-0"><use href="#gut"/></svg><div class="flex flex-1 items-center border-b border-[#d5d7da]"><div class="flex h-full w-[99px] items-center border-r border-[#d5d7da] pl-[2px]">渐变系数</div><div class="pl-[3px] tracking-[0.3px]">0.3</div></div></div>
      <div class="flex h-[25px] bg-[#ecedef]"><svg class="h-[25px] w-[26px] shrink-0"><use href="#gut"/></svg><div class="flex flex-1 items-center border-b border-[#d5d7da]"><div class="flex h-full w-[99px] items-center border-r border-[#d5d7da] pl-[2px]">边界分段数</div><div class="pl-[3px]">1</div></div></div>

      <div class="absolute right-0 top-0 flex h-full w-[15px] flex-col items-center border-l border-[#e4e5e6] bg-white">
        <svg class="mt-[6px] h-[5px] w-[8px]" viewBox="0 0 8 5"><path d="M0 5l4-5 4 5z" fill="#7c8288"/></svg>
        <div class="mt-[3px] h-[258px] w-[6px] bg-[#acb0b4]"></div>
        <svg class="mb-[5px] mt-auto h-[5px] w-[8px]" viewBox="0 0 8 5"><path d="M0 0l4 5 4-5z" fill="#7c8288"/></svg>
      </div>
    </div>
    <div class="flex h-[24px] shrink-0 bg-white pl-[7px]">
      <div class="pt-[3px]">视图</div>
      <div class="ml-[8px] mt-[3px] w-[46px] border border-b-0 border-[#8e9296] bg-[#acb0b4] text-center">数据</div>
    </div>
  </aside>

  <!-- 3D viewport column -->
  <div class="flex min-w-0 flex-1 flex-col">
    <div class="flex h-[36px] shrink-0 items-center border-b border-[#b0b2b5] bg-white pl-[3px]">
      <svg class="h-[24px] w-[28px]" viewBox="0 0 28 24"><path d="M1 5h7l2-3h8l2 3h7v18H1z" fill="url(#gw)" stroke="#6d7b8e"/><circle cx="14" cy="13" r="7.500" fill="#27456f" stroke="#6d7b8e"/><circle cx="14" cy="13" r="3.500" fill="#7fa6d6"/></svg>
      <svg class="ml-[10px] h-[28px] w-[28px]" viewBox="0 0 28 28"><path d="M7 1h14v8H7z" fill="#fff" stroke="#5f6a78" stroke-width="1.400"/><path d="M1 9h26v12H1z" fill="url(#gw)" stroke="#5f6a78" stroke-width="1.400"/><path d="M7 17h14v10H7z" fill="#fff" stroke="#5f6a78" stroke-width="1.400"/><path d="M10 21h8M10 24h8" stroke="#5f6a78"/></svg>
      <div class="ml-[6px] h-[30px] w-px bg-[#c9cbce]"></div>
      <svg class="ml-[4px] h-[28px] w-[27px]" viewBox="0 0 27 28"><path d="M3 10h10v15M13 10L24 3" fill="none" stroke="#4a5565" stroke-width="1.200"/><path d="M1 8h3v3H1zM12 24h3v3h-3z" fill="#fff" stroke="#4a5565"/><path d="M11 8h4v4h-4z" fill="#e08a4a"/><path d="M23 1v5M26 1v5" stroke="#4a5565"/></svg>
      <svg class="ml-[4px] h-[6px] w-[8px]"><use href="#chev"/></svg>
      <svg class="ml-[12px] h-[28px] w-[23px]" viewBox="0 0 23 28"><path d="M11.500 1L22 7.500v13L11.500 27 1 20.500v-13z" fill="#a8c4c8" stroke="#8aa6aa"/><circle cx="11.500" cy="14" r="7.500" fill="#dfe6e8" stroke="#3f4a55" stroke-width="1.800"/><path d="M6 19l11-10" stroke="#3f4a55" stroke-width="1.800"/></svg>
      <svg class="ml-[5px] h-[6px] w-[8px]"><use href="#chev"/></svg>
      <div class="ml-[7px] h-[30px] w-px bg-[#c9cbce]"></div>
      <svg class="ml-[6px] h-[28px] w-[27px]" viewBox="0 0 27 28"><rect x="1" y="1" width="24" height="24" fill="none" stroke="#3d4a5c" stroke-width="1.500" stroke-dasharray="4 3"/><circle cx="12" cy="12" r="6" fill="#e6eef8" stroke="#3c7fc0" stroke-width="1.800"/><path d="M16 16l9 10" stroke="#3c7fc0" stroke-width="3"/></svg>
      <svg class="ml-[11px] h-[28px] w-[27px]" viewBox="0 0 27 28"><rect x=".5" y=".5" width="26" height="27" fill="url(#gw)" stroke="#4d5d73" stroke-width="1.200"/><path d="M.5 3.500h26" stroke="#4d5d73" stroke-width="1.500"/><path d="M13.500 8v14M7 15h13" stroke="#27384f" stroke-width="1.300"/><path d="M13.500 6l3 3.500h-6zM13.500 24l3-3.500h-6zM5 15l3.500-3v6zM22 15l-3.500-3v6z" fill="#27384f"/></svg>
      <svg class="ml-[11px] h-[28px] w-[27px]" viewBox="0 0 27 28"><path d="M13.500 3L25 14 13.500 25 2 14z" fill="#9ea4ac"/><path d="M13.500 3L25 14H2z" fill="#dfe2e6"/><path d="M13.500 3L25 14 13.500 25 2 14z" fill="none" stroke="#6d7684"/><path d="M1 6V1h5M1 1l5 5M26 6V1h-5M26 1l-5 5M1 22v5h5M1 27l5-5M26 22v5h-5M26 27l-5-5" stroke="#2f4a6c" stroke-width="1.200" fill="none"/></svg>
      <svg class="ml-[14px] h-[30px] w-[25px]" viewBox="0 0 25 30"><path d="M5 18V5" stroke="#2467c2" stroke-width="1.600"/><path d="M2 7l3-5 3 5z" fill="#2467c2"/><path d="M5 18l10-6" stroke="#2e9a45" stroke-width="1.600"/><path d="M14 9l5 1-3 4z" fill="#2e9a45"/><path d="M5 18l8 7" stroke="#d9322c" stroke-width="1.600"/><path d="M16 28l-6 0 3-5z" fill="#d9322c"/><text x="8" y="8" font-size="9" font-family="Liberation Sans" fill="#222">Z</text><text x="17" y="17" font-size="9" font-family="Liberation Sans" fill="#222">Y</text><text x="17" y="29" font-size="9" font-family="Liberation Sans" fill="#222">X</text></svg>
      <svg class="ml-[1px] h-[6px] w-[8px]"><use href="#chev"/></svg>
      <div class="ml-[8px] h-[30px] w-px bg-[#c9cbce]"></div>
      <svg class="ml-[5px] h-[28px] w-[27px]" viewBox="0 0 27 28"><path d="M1 6V1h6M20 1h6v5M26 22v5h-6M7 27H1v-5" fill="none" stroke="#3d4a5c" stroke-width="1.400"/><path d="M3 14c5-7 16-7 21 0-5 7-16 7-21 0z" fill="#dfe6ee" stroke="#5a6a80" stroke-width="1.300"/><circle cx="13.500" cy="14" r="4.500" fill="#7f93ad" stroke="#42526a"/></svg>
      <svg class="ml-[11px] h-[30px] w-[28px]" viewBox="0 0 28 30"><rect x="1" y="1" width="12" height="12" fill="url(#go)" stroke="#b8672d"/><rect x="15" y="17" width="12" height="12" fill="#e6ebf2" stroke="#5a6a80" stroke-dasharray="2 1"/><path d="M1 29L27 2" stroke="#4d5d73" stroke-width="1.400"/></svg>
      <div class="ml-[7px] h-[30px] w-px bg-[#c9cbce]"></div>
      <svg class="ml-[5px] h-[28px] w-[28px]"><use href="#bulb"/></svg>
      <svg class="ml-[10px] h-[28px] w-[28px]"><use href="#bulb"/></svg>
    </div>

    <div class="relative h-[768px] shrink-0 bg-gradient-to-b from-[#b8cce2] via-[#cfdae7] to-[#e5e8ee]">
      <svg id="model" class="absolute inset-0 h-full w-full" viewBox="609 207 1311 768" aria-label="铸铁薄壁圆筒网格模型">
        <g id="mesh"></g>
        <!-- model triad -->
        <path d="M1241 589L1263 622" stroke="#123f14" stroke-width="3"/>
        <circle cx="1241" cy="589" r="6" fill="#19e619"/>
        <path d="M1263 622L1163 716" stroke="#e81414" stroke-width="3.500"/>
        <path d="M1145 733L1158 708 1168 719z" fill="#f01010"/>
        <path d="M1263 622L1358 718" stroke="#1010d8" stroke-width="3.500"/>
        <path d="M1372 733L1351 716 1361 707z" fill="#1010e0"/>
        <rect x="1261" y="620" width="4" height="4" fill="#fff"/>
        <!-- corner triad -->
        <path d="M667 918l-16 15" stroke="#f01414" stroke-width="2"/>
        <path d="M648 936l2-7 5 4z" fill="#f01414" stroke="#f01414"/>
        <path d="M667 918l-3-4" stroke="#19d819" stroke-width="2"/>
        <rect x="662" y="911" width="4" height="5" fill="#19d819"/>
        <path d="M667 918l14 14" stroke="#1010e0" stroke-width="2"/>
        <path d="M684 934l-5-1 2-5z" fill="#1010e0" stroke="#1010e0"/>
        <text x="665" y="915" font-size="9" font-family="Liberation Sans" fill="#19c819">Y</text>
        <text x="686" y="935" font-size="9" font-family="Liberation Sans" fill="#1010e0">Z</text>
      </svg>
    </div>

    <div class="flex h-[22px] shrink-0">
      <div class="flex h-full w-[170px] items-center border-r border-t border-[#b0b2b5] bg-white">
        <svg class="h-[20px] w-[20px]"><use href="#logo"/></svg>
        <span class="ml-[10px] whitespace-nowrap">铸铁薄壁圆筒-三维*</span>
      </div>
    </div>
  </div>
</main>

<!-- status bar -->
<footer class="flex h-[33px] shrink-0 items-center justify-between border-y border-[#b0b2b5] pl-[6px] pr-[2px]">
  <span class="text-[#7e8287]">有效, 内部名称: Mesh</span>
  <span class="tracking-[0.4px] text-[#333]">9.9e+02 mm x 5.8e+02 mm</span>
</footer>

<!-- windows taskbar -->
<footer class="flex h-[50px] shrink-0 items-center bg-[#1b1b1b] pl-[20px] text-white">
  <svg class="h-[20px] w-[20px]" viewBox="0 0 20 20"><path d="M0 3l8-1.200v7.700H0zM9 1.600L20 0v9.500H9zM0 10.500h8v7.700L0 17zM9 10.500h11V20L9 18.400z" fill="#fff"/></svg>
  <svg class="ml-[40px] h-[22px] w-[20px]" viewBox="0 0 20 22"><circle cx="12.500" cy="8" r="6.500" fill="none" stroke="#fff" stroke-width="1.400"/><path d="M8 13L1 21" stroke="#fff" stroke-width="1.400"/></svg>
  <div class="ml-[20px] flex h-[43px] w-[205px] items-center bg-[#ebebeb] pl-[8px] text-[#222]">
    <svg class="h-[28px] w-[24px]" viewBox="0 0 24 28"><circle cx="12" cy="14" r="9" fill="none" stroke="#39a0f0" stroke-width="4"/><path d="M4 13h17" stroke="#39a0f0" stroke-width="3"/><path d="M14 18h9v4H14z" fill="#ebebeb"/><path d="M20 4c3-2 4 0 3 3M3 24c-3 1-3-2-1-5" fill="none" stroke="#39a0f0" stroke-width="1.500"/></svg>
    <svg class="ml-[6px] h-[6px] w-[8px]" viewBox="0 0 8 6"><path d="M4 0l4 6H0z" fill="#a6a8aa"/></svg>
    <span class="ml-[4px]">档案管理系统</span>
  </div>
  <div class="flex h-[43px] w-[70px] items-center justify-center whitespace-nowrap bg-[#2088f5]">搜索一下</div>
  <div class="ml-[9px] h-[26px] w-[3px] border-x border-[#4a4a4a]"></div>
  <svg class="ml-[30px] h-[30px] w-[28px]" viewBox="0 0 28 30"><path d="M1 2h11l3 3h12v6H1z" fill="#f0b429"/><path d="M1 7h26v22H1z" fill="#fcd75e"/><path d="M9 20h10v9H9z" fill="#4a9fd8"/><path d="M11 22h6v7h-6z" fill="#9bd0f0"/></svg>
  <svg class="ml-[33px] h-[30px] w-[30px]" viewBox="0 0 30 30"><path d="M9 1h20v28H9z" fill="#1f8a52"/><path d="M19 1h10v9H19z" fill="#33c481"/><path d="M19 20h10v9H19z" fill="#185c37"/><path d="M9 10h10v10H9z" fill="#107c41"/><path d="M1 7h16v16H1z" fill="#0e6b38"/><text x="9" y="20" text-anchor="middle" font-size="12" font-weight="700" font-family="Liberation Sans" fill="#fff">X</text></svg>
  <svg class="ml-[32px] h-[30px] w-[30px]" viewBox="0 0 30 30"><path d="M9 1h20v28H9z" fill="#2b7cd3"/><path d="M9 1h20v9H9z" fill="#41a5ee"/><path d="M9 20h20v9H9z" fill="#103f91"/><path d="M1 7h16v16H1z" fill="#185abd"/><text x="9" y="20" text-anchor="middle" font-size="12" font-weight="700" font-family="Liberation Sans" fill="#fff">W</text></svg>
  <div class="relative ml-[22px] flex h-full w-[51px] items-center justify-center">
    <svg class="h-[38px] w-[30px]" viewBox="0 0 30 38"><path d="M1 6C10 0 20 0 29 4c1 8 1 16 0 24-8 8-18 10-28 6z" fill="#1f66c8"/><path d="M1 6c6-3 11-4 15-4-7 4-9 9-9 14 0 6 5 8 8 11-1 3-4 7-8 9l-6-2z" fill="#c9ced4"/><path d="M23 9c-5-4-13-3-14 3-1 7 12 7 12 14 0 5-7 6-12 3" fill="none" stroke="#fff" stroke-width="3.500"/></svg>
    <div class="absolute bottom-0 h-[3px] w-full bg-[#7fb8e8]"></div>
  </div>
  <div class="relative ml-[6px] flex h-full w-[61px] items-center justify-center bg-[#444]">
    <svg class="h-[30px] w-[30px]"><use href="#logo"/></svg>
    <div class="absolute bottom-0 h-[3px] w-full bg-[#7fb8e8]"></div>
  </div>

  <svg class="ml-auto h-[26px] w-[26px]" viewBox="0 0 26 26"><circle cx="13" cy="13" r="12" fill="#1f8ee0" stroke="#fff" stroke-width="2"/><text x="13" y="19.500" text-anchor="middle" font-size="18" font-weight="700" font-family="Liberation Sans" fill="#fff">?</text></svg>
  <svg class="ml-[14px] h-[10px] w-[14px]" viewBox="0 0 14 10"><path d="M.5 9L7 1.500 13.500 9" fill="none" stroke="#fff" stroke-width="1.200"/></svg>
  <svg class="ml-[15px] h-[16px] w-[18px]" viewBox="0 0 18 16"><path d="M1 15c0-7 5-13 12-14M4 15c0-5 4-9 9-10M7 15c0-3 2-5 6-6" fill="none" stroke="#cfcfcf"/><circle cx="13" cy="14" r="1.500" fill="#fff"/></svg>
  <svg class="ml-[10px] h-[20px] w-[20px]" viewBox="0 0 20 20"><circle cx="10" cy="10" r="10" fill="#4aa03c"/><path d="M1 8c3-6 15-7 18 0-3 4-5 6-9 3-4-2-6 0-9-3z" fill="#f0c920"/><circle cx="10" cy="10" r="4.500" fill="#f0c920"/><path d="M10 7v6M7 10h6" stroke="#2e7d28" stroke-width="1.800"/></svg>
  <svg class="ml-[11px] h-[20px] w-[18px]" viewBox="0 0 18 20"><ellipse cx="9" cy="7" rx="6" ry="7" fill="#111"/><ellipse cx="9" cy="13" rx="6" ry="6" fill="#eee"/><path d="M2 9h14l2 4-5-1H5l-5 1z" fill="#d8232a"/><circle cx="7" cy="5" r="1.200" fill="#fff"/><circle cx="11" cy="5" r="1.200" fill="#fff"/><path d="M7 7h4l-2 1.500z" fill="#f2b01e"/><path d="M3 18h5v2H3zM10 18h5v2h-5z" fill="#f2b01e"/></svg>
  <svg class="ml-[11px] h-[14px] w-[21px]" viewBox="0 0 21 14"><path d="M4 3h15v9H4z" fill="#e8e8e8" stroke="#fff"/><path d="M5 4h13v7H5z" fill="#1b1b1b"/><path d="M6 5h11v5H6z" fill="#e8e8e8"/><path d="M20 6h1v3h-1zM0 6h4M2 2v4" stroke="#fff"/></svg>
  <svg class="ml-[9px] h-[16px] w-[20px]" viewBox="0 0 20 16"><path d="M1 5h3l4-4v14l-4-4H1z" fill="none" stroke="#fff"/><path d="M11 5c1.500 2 1.500 4 0 6M14 3c2 3 2 7 0 10M17 1c3 4 3 10 0 14" fill="none" stroke="#9a9a9a"/></svg>
  <span class="ml-[9px] w-[20px] text-[20px]">英</span>
  <div class="ml-[17px] flex h-[18px] w-[18px] items-center justify-center bg-white text-[14px] text-black">拼</div>
  <div class="ml-[26px] w-[78px] text-center text-[14px] leading-[20px] text-[#e8e8e8]">
    <div class="whitespace-nowrap">17:26 周日</div>
    <div class="whitespace-nowrap">2022/12/4</div>
  </div>
  <div class="relative ml-[27px] mr-[31px] h-[18px] w-[20px] bg-white">
    <div class="mx-[3px] mt-[3px] h-px bg-[#333]"></div>
    <div class="mx-[3px] mt-[3px] h-px bg-[#333]"></div>
    <div class="absolute left-[9px] top-[8px] flex h-[20px] w-[20px] items-center justify-center rounded-full border border-[#8a8a8a] bg-[#333] text-[13px] font-bold">1</div>
  </div>
</footer>

<script>
  // Builds the triangle mesh of the shaft: three stepped cylinders drawn back to front.
  const axis = [0.7, 0.714];
  const perp = [0.714, -0.7];
  const origin = [989, 338];
  const RING_K = 0.2; // how far a ring bows along the axis
  const CAP_K = 0.4; // how far the end face bows towards the viewer
  const STEP = 13.5;

  let seed = 7;
  const rand = (amount) => {
    seed = (seed * 16807) % 2147483647;
    return (seed / 2147483647 - 0.5) * amount;
  };
  const at = (t, side) => [
    origin[0] + axis[0] * t + perp[0] * side,
    origin[1] + axis[1] * t + perp[1] * side,
  ];
  const pt = (p) => p[0].toFixed(1) + " " + p[1].toFixed(1);
  const onBody = (t, a, r) => at(t + RING_K * r * Math.cos(a), r * Math.sin(a));
  const onCap = (t, a, r) => at(t + (Math.cos(a) < 0 ? CAP_K : RING_K) * r * Math.cos(a), r * Math.sin(a));

  function cap(t, outer, inner, fill, size) {
    let outline = "M";
    for (let i = 0; i <= 60; i++) outline += (i ? "L" : "") + pt(onCap(t, (i / 60) * Math.PI * 2, outer));
    let lines = "";
    const rings = [];
    const count = Math.max(2, Math.round((outer - inner) / size));
    for (let k = 0; k <= count; k++) {
      const r = inner + ((outer - inner) * k) / count;
      const n = Math.max(1, Math.round((Math.PI * 2 * r) / (size * 1.4)));
      const ring = [];
      for (let j = 0; j < n; j++) ring.push(onCap(t, (j / n) * Math.PI * 2, r));
      rings.push(ring);
    }
    rings.forEach((ring, k) => {
      ring.forEach((p, j) => {
        lines += "M" + pt(p) + "L" + pt(ring[(j + 1) % ring.length]);
        if (k > 0) {
          const prev = rings[k - 1];
          const m = Math.floor((j * prev.length) / ring.length);
          lines += "M" + pt(p) + "L" + pt(prev[m]) + "M" + pt(p) + "L" + pt(prev[(m + 1) % prev.length]);
        }
      });
    });
    return '<path d="' + outline + 'Z" fill="' + fill + '" stroke="#08121c" stroke-width="1.500"/><path d="' + lines + '" fill="none" stroke="#08121c" stroke-width="1.100"/>';
  }

  function body(id, t0, t1, r, edge) {
    const half = Math.PI / 2;
    let outline = "M";
    for (let i = 0; i <= 30; i++) outline += (i ? "L" : "") + pt(onBody(t1, -half + (i / 30) * Math.PI, r));
    for (let i = 30; i >= 0; i--) outline += "L" + pt(onBody(t0, -half + (i / 30) * Math.PI, r));

    const rows = Math.round((t1 - t0) / STEP);
    const cols = Math.round((Math.PI * r) / 16);
    const grid = [];
    for (let i = 0; i <= rows; i++) {
      const row = [];
      for (let j = 0; j <= cols + 1; j++) {
        let a = -half + ((j - (i % 2) * 0.5) * Math.PI) / cols;
        a = Math.min(half, Math.max(-half, a + (j > 0 && j <= cols ? rand(0.08) : 0)));
        const t = t0 + ((t1 - t0) * i) / rows + (i > 0 && i < rows ? rand(3) : 0);
        row.push(onBody(t, a, r));
      }
      grid.push(row);
    }
    let lines = "";
    grid.forEach((row, i) => {
      row.forEach((p, j) => {
        if (j < row.length - 1) lines += "M" + pt(p) + "L" + pt(row[j + 1]);
        if (i < rows) {
          const next = grid[i + 1];
          lines += "M" + pt(p) + "L" + pt(next[j]);
          if (i % 2 === 0 && j < row.length - 1) lines += "M" + pt(p) + "L" + pt(next[j + 1]);
          if (i % 2 === 1 && j > 0) lines += "M" + pt(p) + "L" + pt(next[j - 1]);
        }
      });
    });
    const from = at((t0 + t1) / 2, -r);
    const to = at((t0 + t1) / 2, r);
    const gradient =
      '<linearGradient id="' + id + '" gradientUnits="userSpaceOnUse" x1="' + from[0] + '" y1="' + from[1] + '" x2="' + to[0] + '" y2="' + to[1] + '">' +
      '<stop offset="0" stop-color="#1f3a58"/><stop offset=".2" stop-color="#2f5580"/><stop offset=".5" stop-color="#447aaf"/>' +
      '<stop offset=".8" stop-color="#2f5580"/><stop offset="1" stop-color="#1f3a58"/></linearGradient>';
    const clip = '<clipPath id="' + id + 'c"><path d="' + outline + 'Z"/></clipPath>';
    return gradient + clip +
      '<path d="' + outline + 'Z" fill="url(#' + id + ')" stroke="#08121c" stroke-width="' + edge + '"/>' +
      '<path clip-path="url(#' + id + 'c)" d="' + lines + '" fill="none" stroke="#08121c" stroke-width="1.400"/>';
  }

  document.getElementById("mesh").innerHTML =
    body("s3", 529, 788, 50, 1.6) +
    cap(265, 76, 48, "#2b4d74", 7) +
    body("s2", 265, 529, 76, 2.4) +
    cap(0, 50, 0, "#24405f", 6) +
    body("s1", 0, 265, 50, 0);
</script>
</body>
</html>
